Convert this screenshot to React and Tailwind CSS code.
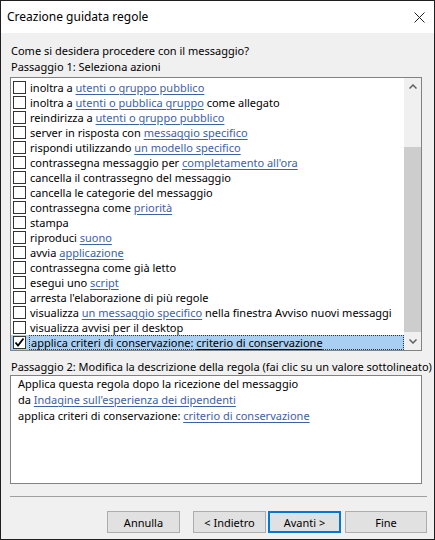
import React from "react";

const L = ({ children }) => (
  <span className="text-[#3b62a6] underline underline-offset-[2px] decoration-[#3b62a6]">{children}</span>
);

const rows = [
  <>inoltra a <L>utenti o gruppo pubblico</L></>,
  <>inoltra a <L>utenti o pubblica gruppo</L> come allegato</>,
  <>reindirizza a <L>utenti o gruppo pubblico</L></>,
  <>server in risposta con <L>messaggio specifico</L></>,
  <>rispondi utilizzando <L>un modello specifico</L></>,
  <>contrassegna messaggio per <L>completamento all'ora</L></>,
  <>cancella il contrassegno del messaggio</>,
  <>cancella le categorie del messaggio</>,
  <>contrassegna come <L>priorità</L></>,
  <>stampa</>,
  <>riproduci <L>suono</L></>,
  <>avvia <L>applicazione</L></>,
  <>contrassegna come già letto</>,
  <>esegui uno <L>script</L></>,
  <>arresta l'elaborazione di più regole</>,
  <>visualizza <L>un messaggio specifico</L> nella finestra Avviso nuovi messaggi</>,
  <>visualizza avvisi per il desktop</>,
];

function Box({ checked }) {
  return (
    <div className="w-[13px] h-[13px] border border-[#333] bg-white flex items-center justify-center shrink-0">
      {checked && (
        <svg width="11" height="11" viewBox="0 0 11 11">
          <path d="M1.5 5.5 L4 8.5 L9.5 1.5" fill="none" stroke="#000" strokeWidth="1.8" />
        </svg>
      )}
    </div>
  );
}

export default function App() {
  return (
    <div
      className="w-[435px] h-[540px] border border-[#1f1f1f] flex flex-col bg-[#f0f0f0] text-[11px] text-black overflow-hidden"
      style={{ fontFamily: '"Noto Sans", sans-serif' }}
    >
      <div className="h-[32px] bg-white flex items-center justify-between pl-[6px] pr-[9px] shrink-0">
        <span className="text-[12px]">Creazione guidata regole</span>
        <svg width="11" height="11" viewBox="0 0 11 11">
          <path d="M0.5 0.5 L10.5 10.5 M10.5 0.5 L0.5 10.5" stroke="#222" strokeWidth="1" />
        </svg>
      </div>
      <div className="flex-1 flex flex-col pl-[9px] pt-[10px]">
        <div className="h-[16px] leading-[16px] pl-px">Come si desidera procedere con il messaggio?</div>
        <div className="h-[16px] leading-[16px] pl-px">Passaggio 1: Seleziona azioni</div>
        <div className="mt-[2px] w-[412px] h-[274px] border border-[#828282] bg-white flex shrink-0">
          <div className="flex-1 pt-[2px] flex flex-col overflow-hidden">
            {rows.map((r, i) => (
              <div key={i} className="h-[15px] shrink-0 flex items-center pl-[2px] leading-[15px] whitespace-nowrap">
                <Box />
                <span className="ml-[4px]">{r}</span>
              </div>
            ))}
            <div className="h-[15px] shrink-0 flex items-center pl-[2px] bg-[#a9d0f3] leading-[13px] whitespace-nowrap">
              <Box checked />
              <span className="ml-[3px] flex-1 border border-dotted border-[#333] h-[15px] flex items-center pl-px">
                applica criteri di conservazione:&nbsp;<span className="underline underline-offset-[2px]">criterio di conservazione</span>
              </span>
            </div>
          </div>
          <div className="w-[17px] shrink-0 flex flex-col bg-[#f0f0f0]">
            <div className="h-[17px] flex items-center justify-center">
              <svg width="8" height="5" viewBox="0 0 8 5">
                <path d="M0.5 4.5 L4 1 L7.5 4.5" fill="none" stroke="#606060" strokeWidth="1.5" />
              </svg>
            </div>
            <div className="h-[52px]" />
            <div className="h-[185px] bg-[#cdcdcd]" />
            <div className="flex-1 flex items-center justify-center">
              <svg width="8" height="5" viewBox="0 0 8 5">
                <path d="M0.5 0.5 L4 4 L7.5 0.5" fill="none" stroke="#606060" strokeWidth="1.5" />
              </svg>
            </div>
          </div>
        </div>
        <div className="mt-[8px] h-[16px] leading-[16px] pl-px whitespace-nowrap">
          Passaggio 2: Modifica la descrizione della regola (fai clic su un valore sottolineato)
        </div>
        <div className="w-[412px] h-[109px] shrink-0 border border-[#828282] bg-white pl-[7px] leading-[16px]">
          <div>Applica questa regola dopo la ricezione del messaggio</div>
          <div>da <L>Indagine sull'esperienza dei dipendenti</L></div>
          <div>applica criteri di conservazione: <L>criterio di conservazione</L></div>
        </div>
        <div className="mt-[12px] w-[417px] h-px bg-[#a0a0a0] shrink-0" />
        <div className="mt-[14px] w-[417px] flex justify-end h-[22px] shrink-0">
          <button className="w-[73px] h-[22px] bg-[#e1e1e1] border border-[#adadad] text-[11px] leading-none">Annulla</button>
          <button className="ml-[13px] w-[73px] h-[22px] bg-[#e1e1e1] border border-[#adadad] text-[11px] leading-none">&lt; Indietro</button>
          <button className="ml-[2px] w-[73px] h-[22px] bg-[#e1e1e1] border-2 border-[#0078d7] text-[11px] leading-none">Avanti &gt;</button>
          <button className="ml-[4px] w-[82px] h-[22px] bg-[#e1e1e1] border border-[#adadad] text-[11px] leading-none">Fine</button>
        </div>
      </div>
    </div>
  );
}
